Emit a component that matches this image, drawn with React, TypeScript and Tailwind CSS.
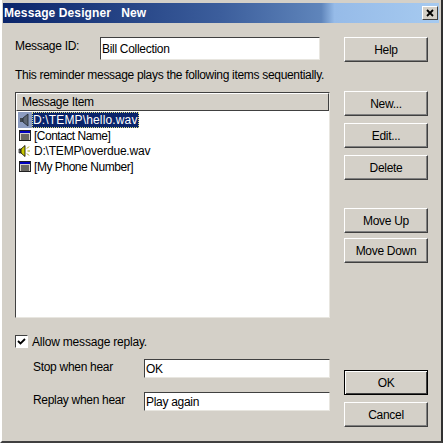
const Btn = ({ label, isDefault }: { label: string; isDefault?: boolean }) => (
  <button
    className={
      isDefault
        ? 'w-[84px] h-[25px] bg-[#d4d0c8] border border-black shadow-[inset_1px_1px_0_#fff,inset_-1px_-1px_0_#404040] text-[12px] tracking-[-0.3px] text-black'
        : 'w-[84px] h-[25px] bg-[#d4d0c8] border border-t-white border-l-white border-r-[#404040] border-b-[#404040] shadow-[inset_-1px_-1px_0_#808080] text-[12px] tracking-[-0.3px] text-black'
    }
  >
    {label}
  </button>
);

const Field = ({ value, className }: { value: string; className: string }) => (
  <div
    className={`${className} bg-white border border-t-[#404040] border-l-[#404040] border-r-[#e8e6e0] border-b-[#e8e6e0] pl-[1px] flex items-center text-[12px] tracking-[-0.3px] text-black`}
  >
    {value}
  </div>
);

const SpeakerIcon = () => (
  <svg width="14" height="14" viewBox="0 0 14 14" className="shrink-0">
    <path d="M1 5h2v4H1z" fill="#808080" stroke="#000" strokeWidth="0.6" />
    <path d="M3 5l4-3.5v11L3 9z" fill="#c8c800" stroke="#000" strokeWidth="0.8" />
    <path d="M9 4.5l2-2M9.5 7H12M9 9.5l2 2" stroke="#a0a000" strokeWidth="1" fill="none" />
  </svg>
);

const SpeakerSelected = () => (
  <svg width="14" height="16" viewBox="0 0 14 16" className="shrink-0 bg-[#8c9cc0]">
    <path d="M2 6h3v4H2z" fill="#404850" />
    <path d="M5 6l5-4v12l-5-4z" fill="#5c6470" stroke="#202830" strokeWidth="0.8" />
  </svg>
);

const TextIcon = () => (
  <svg width="14" height="14" viewBox="0 0 14 14" className="shrink-0">
    <rect x="1.5" y="1.5" width="11" height="10" fill="#d4d0c8" stroke="#202020" />
    <rect x="2" y="2" width="10" height="2" fill="#0000c0" />
    <path d="M3 6h8M3 8h8M3 10h8" stroke="#000" strokeWidth="1" />
  </svg>
);

const items = [
  { icon: <TextIcon />, label: '[Contact Name]', spacing: 'tracking-[-0.5px]' },
  { icon: <SpeakerIcon />, label: 'D:\\TEMP\\overdue.wav', spacing: 'tracking-[-0.2px]' },
  { icon: <TextIcon />, label: '[My Phone Number]', spacing: 'tracking-[-0.45px]' },
];

export default function App() {
  return (
    <div className="w-[445px] h-[447px] bg-white font-['Liberation_Sans',sans-serif] overflow-hidden">
      <div className="w-[443px] h-[443px] bg-[#d4d0c8] border-l-2 border-l-white border-r-2 border-r-[#303030] border-b-2 border-b-[#404040] pl-[1px] pr-[2px] pt-[3px] flex flex-col">
        {/* Title bar */}
        <div className="h-[20px] shrink-0 flex items-center justify-between pl-[1px] pr-[1px] bg-[linear-gradient(90deg,#0a246a_0%,#3c5e9c_50%,#5f85bb_73%,#96bbe8_76%,#a6caf0_100%)]">
          <span className="text-white font-bold text-[12px] whitespace-pre tracking-[0.1px]">Message Designer   New</span>
          <div className="w-[16px] h-[14px] bg-[#d4d0c8] border border-t-white border-l-white border-r-[#404040] border-b-[#404040] flex items-center justify-center">
            <svg width="10" height="10" viewBox="0 0 10 10">
              <path d="M2 2l6 6M8 2l-6 6" stroke="#000" strokeWidth="1.8" />
            </svg>
          </div>
        </div>

        <div className="flex flex-1 pl-[12px] pt-[14px]">
          {/* Left column */}
          <div className="w-[315px] flex flex-col">
            <div className="flex items-center h-[23px]">
              <span className="w-[85px] text-[12px] tracking-[-0.3px] text-black mb-[6px]">Message ID:</span>
              <Field value="Bill Collection" className="w-[220px] h-[23px]" />
            </div>
            <p className="mt-[7px] text-[12px] tracking-[-0.31px] leading-[16px] text-black whitespace-nowrap">
              This reminder message plays the following items sequentially.
            </p>
            <div className="mt-[9px] w-[315px] h-[226px] bg-white border border-t-[#404040] border-l-[#404040] border-r-[#e8e6e0] border-b-[#e8e6e0] flex flex-col">
              <div className="h-[18px] bg-[#d4d0c8] border border-t-white border-l-white border-r-[#404040] border-b-[#404040] pl-[5px] flex items-center text-[12px] tracking-[-0.3px] text-black">
                Message Item
              </div>
              <div className="flex items-center h-[16px] mt-[1px] pl-[2px]">
                <SpeakerSelected />
                <span className="bg-[#0a246a] text-white text-[12px] tracking-[0.15px] leading-[16px] px-[1px] outline-1 outline-dotted outline-[#e0e080] -outline-offset-1">
                  D:\TEMP\hello.wav
                </span>
              </div>
              {items.map((item) => (
                <div key={item.label} className={`flex items-center h-[15.5px] pl-[2px] text-[12px] text-black ${item.spacing}`}>
                  {item.icon}
                  <span className="pl-[2px]">{item.label}</span>
                </div>
              ))}
            </div>

            <label className="mt-[17px] flex items-center h-[13px] text-[12px] tracking-[-0.2px] text-black">
              <span className="w-[13px] h-[13px] bg-white border border-t-[#404040] border-l-[#404040] border-r-white border-b-white flex items-center justify-center mr-[4px]">
                <svg width="9" height="9" viewBox="0 0 9 9">
                  <path d="M1 4l2.5 2.5L8 2" stroke="#000" strokeWidth="1.8" fill="none" />
                </svg>
              </span>
              Allow message replay.
            </label>
            <div className="mt-[11px] flex items-center h-[19px] pl-[18px]">
              <span className="w-[111px] text-[12px] tracking-[-0.3px] text-black mb-[4px]">Stop when hear</span>
              <Field value="OK" className="w-[186px] h-[19px]" />
            </div>
            <div className="mt-[14px] flex items-center h-[19px] pl-[18px]">
              <span className="w-[111px] text-[12px] tracking-[-0.3px] text-black mb-[4px]">Replay when hear</span>
              <Field value="Play again" className="w-[186px] h-[19px]" />
            </div>
          </div>

          {/* Buttons */}
          <div className="ml-[14px] flex flex-col">
            <Btn label="Help" />
            <div className="mt-[29px] flex flex-col gap-[7px]">
              <Btn label="New..." />
              <Btn label="Edit..." />
              <Btn label="Delete" />
            </div>
            <div className="mt-[28px] flex flex-col gap-[5px]">
              <Btn label="Move Up" />
              <Btn label="Move Down" />
            </div>
            <div className="mt-[107px] flex flex-col gap-[7px]">
              <Btn label="OK" isDefault />
              <Btn label="Cancel" />
            </div>
          </div>
        </div>
      </div>
    </div>
  );
}
